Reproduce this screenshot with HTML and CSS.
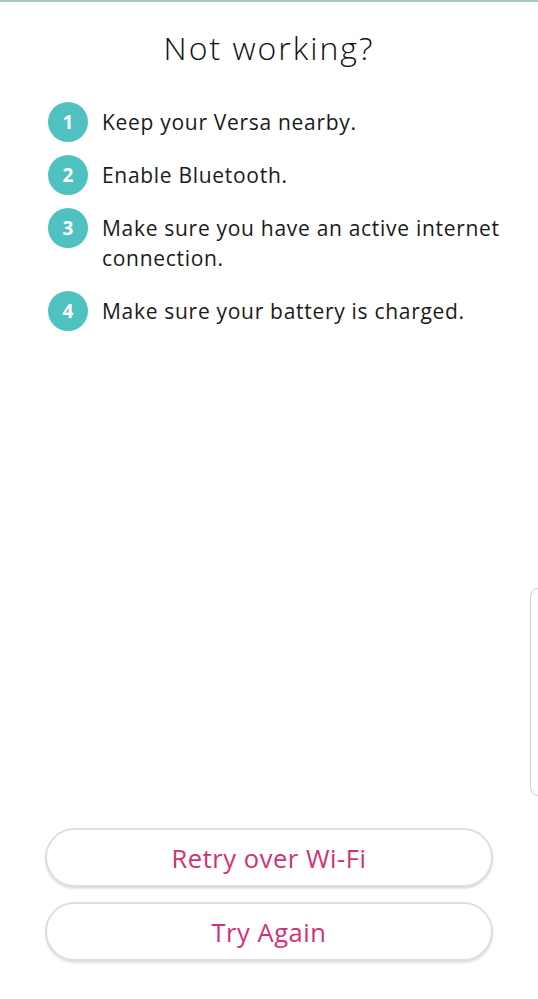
FILE: index.html
```html
<!DOCTYPE html>
<html>
<head>
<meta charset="utf-8">
<link rel="stylesheet" href="styles.css">
</head>
<body>
<div class="topline"></div>
<main class="page">
  <h1 class="title">Not working?</h1>
  <ol class="steps">
    <li class="step"><span class="num">1</span><span class="text">Keep your Versa nearby.</span></li>
    <li class="step"><span class="num">2</span><span class="text">Enable Bluetooth.</span></li>
    <li class="step"><span class="num">3</span><span class="text">Make sure you have an active internet connection.</span></li>
    <li class="step"><span class="num">4</span><span class="text">Make sure your battery is charged.</span></li>
  </ol>
  <div class="spacer"></div>
  <div class="buttons">
    <button class="btn">Retry over Wi-Fi</button>
    <button class="btn">Try Again</button>
  </div>
</main>
<div class="edge-handle"></div>
</body>
</html>
```
FILE: styles.css
```css
html, body {
  margin: 0;
  padding: 0;
  background: #ffffff;
}
body {
  width: 538px;
  height: 999px;
  overflow: hidden;
  position: relative;
  font-family: "Open Sans", "Lato", sans-serif;
  color: #1a1a1a;
}
.topline {
  height: 2px;
  background: #a9c7c6;
}
.page {
  display: flex;
  flex-direction: column;
  height: 997px;
}
.title {
  margin: 26px 0 0 0;
  font-size: 32px;
  font-weight: 300;
  text-align: center;
  line-height: 40px;
  letter-spacing: 2px;
  color: #111;
}
.steps {
  list-style: none;
  margin: 34px 0 0 0;
  padding: 0 20px 0 48px;
  display: flex;
  flex-direction: column;
  gap: 13px;
}
.step {
  display: flex;
  align-items: flex-start;
  gap: 14px;
}
.num {
  flex: 0 0 40px;
  width: 40px;
  height: 40px;
  border-radius: 50%;
  background: #4fc1c1;
  color: #fff;
  font-weight: 700;
  font-size: 19px;
  display: flex;
  align-items: center;
  justify-content: center;
}
.text {
  font-size: 21px;
  line-height: 30px;
  padding: 5px 0;
  letter-spacing: 0.7px;
}
.spacer {
  flex: 1;
}
.buttons {
  display: flex;
  flex-direction: column;
  gap: 15px;
  padding: 0 45px 38px 45px;
}
.btn {
  height: 59px;
  border: 2px solid #dedede;
  border-radius: 30px;
  background: #fff;
  box-shadow: 0 2px 2px rgba(0,0,0,0.12);
  color: #d2307a;
  font-family: "Open Sans", "Lato", sans-serif;
  font-size: 25.5px;
  font-weight: 400;
  letter-spacing: 0.55px;
}
.edge-handle {
  position: absolute;
  right: -10px;
  top: 588px;
  width: 16px;
  height: 206px;
  border: 1.5px solid #cfcfcf;
  border-radius: 8px;
}
```
